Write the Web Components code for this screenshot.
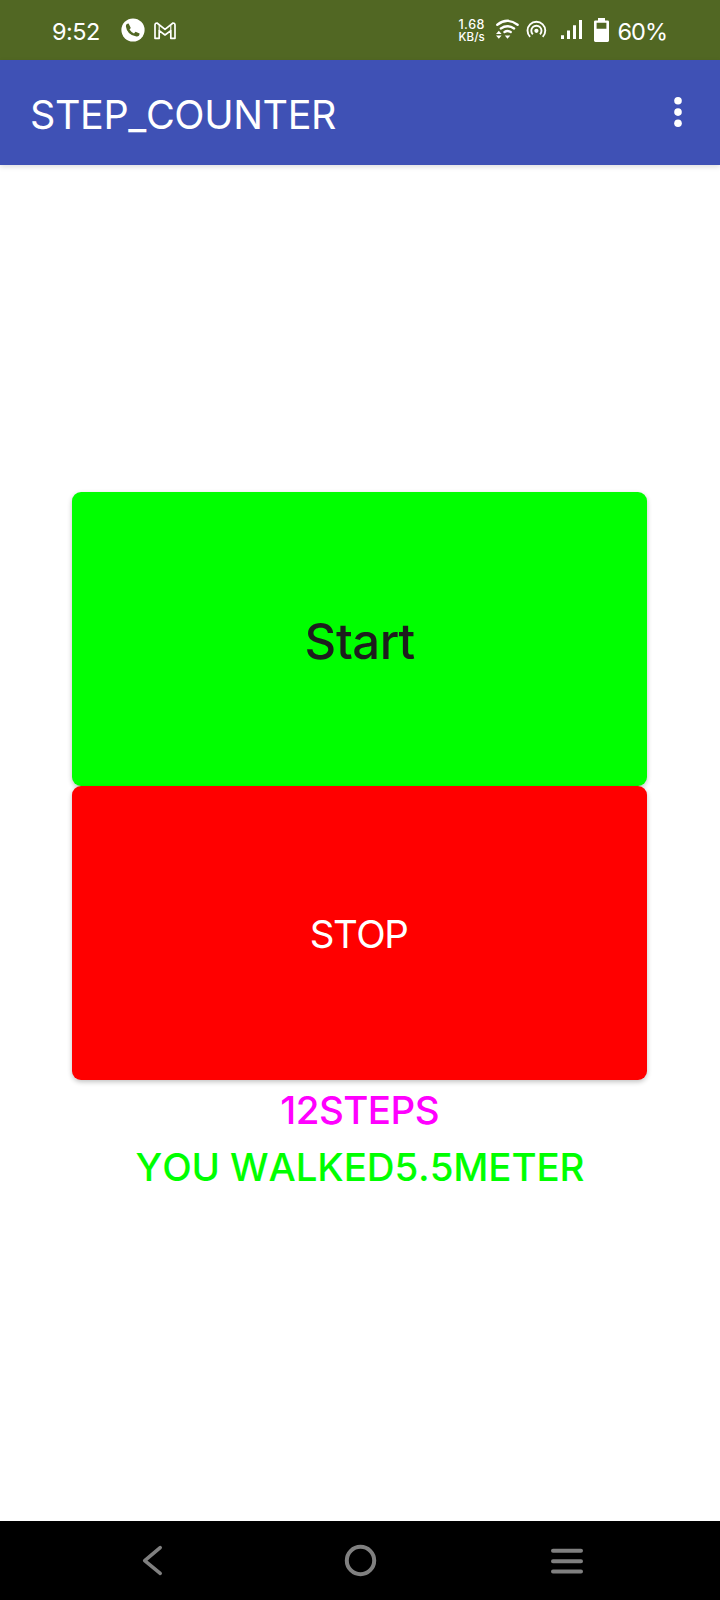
<!DOCTYPE html>
<html lang="en">
<head>
<meta charset="utf-8">
<title>STEP_COUNTER</title>
<style>
html,body{margin:0;padding:0;background:#fff}
body{font-family:Inter,"Liberation Sans",sans-serif}
</style>
</head>
<body>
<step-app></step-app>
<script>
const define = (name, html) => customElements.define(name, class extends HTMLElement {
  constructor() {
    super();
    this.attachShadow({ mode: 'open' }).innerHTML = html;
  }
});

/* A line of text tracked so that its ink spans exactly `width` pixels. */
customElements.define('fit-text', class extends HTMLElement {
  constructor() {
    super();
    this.attachShadow({ mode: 'open' }).innerHTML =
      '<style>:host{display:block;white-space:nowrap}span{display:block}</style><span></span>';
  }
  connectedCallback() {
    const span = this.shadowRoot.querySelector('span');
    const text = this.getAttribute('text'), width = +this.getAttribute('width');
    const size = this.getAttribute('size'), weight = this.getAttribute('weight') || 400;
    const line = this.getAttribute('line') || 1.2;
    const ctx = document.createElement('canvas').getContext('2d');
    ctx.font = `${weight} ${size}px Inter, "Liberation Sans", sans-serif`;
    ctx.fontKerning = 'none';
    const m = ctx.measureText(text);
    const ink = m.actualBoundingBoxLeft + m.actualBoundingBoxRight;
    span.textContent = text;
    span.style.font = `${weight} ${size}px/${line} Inter, "Liberation Sans", sans-serif`;
    span.style.fontKerning = 'none';
    span.style.letterSpacing = (width - ink) / (text.length - 1) + 'px';
    span.style.marginLeft = m.actualBoundingBoxLeft + 'px';
    this.style.width = width + 'px';
  }
});

define('status-bar', `
<style>
:host{display:flex;box-sizing:border-box;height:60px;background:#516723;color:#fff;padding:0 54px 0 53px;align-items:center}
svg{display:block;flex:none}
.time,.pct{padding-top:4px}
.call{margin-left:22px}
.mail{margin-left:9px;margin-top:1px}
.rate{margin-left:auto;padding-top:1px}
.sys{margin-left:9px}
.pct{margin-left:8px}
</style>
<fit-text class="time" text="9:52" width="46" size="23.5"></fit-text>
<svg class="call" width="24" height="24" viewBox="0 0 24 24"><circle cx="12" cy="12" r="11.6" fill="#fff"/><path d="M7.6 5.6 9.8 10 8.5 11.5Q10 14 13 15.4L14.5 13.8 18.6 15.4Q18.5 18.6 15.5 18.4 6.2 17.2 4.9 8.4 4.9 5.6 7.6 5.6Z" fill="#516723"/></svg>
<svg class="mail" width="22" height="18" viewBox="0 0 22 18" fill="none" stroke="#fff" stroke-width="1.7" stroke-linejoin="round"><path d="M1 16.3V3.1Q1 1 3 1L11 7.3 19 1Q21 1 21 3.1V16.3H16.8V8.6L11 13 5.2 8.6V16.3Z"/><path d="M5.2 8.6V3.2M16.8 8.6V3.2" stroke-width="1.1"/></svg>
<div class="rate"><fit-text text="1.68" width="26" size="12.5" weight="500" line="12px"></fit-text><fit-text text="KB/s" width="26" size="11.5" weight="500" line="12px"></fit-text></div>
<svg class="sys" width="117" height="60" viewBox="494 0 117 60" fill="none" stroke="#fff">
<g stroke-width="2.4" stroke-linecap="round"><path d="M497.3 24.7Q507.5 17 517.6 24.7"/><path d="M500.8 28.4Q507.5 24 514.1 28.4"/><path d="M504.5 32.1Q507.5 30 510.7 32.1"/></g>
<path d="M498.8 30.7 501.6 34H496ZM496 35.5H501.6L498.8 38.7ZM504.8 35.5H510.3L507.5 38.7Z" fill="#fff" stroke="none"/>
<g stroke-width="1.9"><path d="M530.1 36.9A8.9 8.9 0 1 1 542.7 36.9"/><path d="M532.8 34.4A5.1 5.1 0 1 1 540 34.4"/></g><circle cx="536.4" cy="30.8" r="2.1" fill="#fff" stroke="none"/>
<g fill="#fff" stroke="none"><path d="M561 35.2h3v3.8h-3zM567 30.4h3V39h-3zM573 25.3h3V39h-3zM579 20h3v19h-3z"/><path fill-rule="evenodd" d="M598 18h7v2.4h2.6q1.4 0 1.4 1.4v18.7q0 1.4-1.4 1.4h-12.2q-1.4 0-1.4-1.4V21.8q0-1.4 1.4-1.4H598ZM596.6 22.8v6h9.8v-6Z"/></g>
</svg>
<fit-text class="pct" text="60%" width="47.5" size="23.5"></fit-text>`);

define('app-bar', `
<style>
:host{display:flex;box-sizing:border-box;height:104.5px;background:#3f51b5;color:#fff;align-items:center;justify-content:space-between;padding:5px 38px 0 32px;box-shadow:0 2px 5px rgba(0,0,0,.13)}
fit-text{padding-top:2px}
svg{display:block;margin-top:-5px}
</style>
<fit-text text="STEP_COUNTER" width="304" size="39.5"></fit-text>
<svg width="8" height="32" viewBox="0 0 8 32" fill="#fff"><circle cx="4" cy="4.8" r="3.8"/><circle cx="4" cy="16.1" r="3.8"/><circle cx="4" cy="27.3" r="3.8"/></svg>`);

define('action-button', `
<style>
:host{display:flex;box-sizing:border-box;width:575px;height:294px;border-radius:9px;align-items:center;justify-content:center;background:var(--fill);color:var(--ink);box-shadow:0 2px 5px rgba(0,0,0,.24)}
</style><slot></slot>`);

define('nav-bar', `
<style>
:host{display:grid;grid-template-columns:repeat(3,207px);justify-content:center;align-items:center;justify-items:center;height:79px;background:#000}
svg{display:block;overflow:visible}
</style>
<svg width="20" height="30" viewBox="0 0 20 30" fill="none" stroke="#808080" stroke-width="3.6" stroke-linecap="round" stroke-linejoin="round"><path d="M17.2 1.7 1.7 14.7 17.2 27.3"/></svg>
<svg width="32" height="32" viewBox="0 0 32 32" fill="none" stroke="#808080" stroke-width="4"><circle cx="16.5" cy="15.5" r="13.7"/></svg>
<svg width="32" height="26" viewBox="0 0 32 26" fill="none" stroke="#808080" stroke-width="4" stroke-linecap="round"><path d="M2 2.8H30M2 13.2H30M2 23.6H30"/></svg>`);

define('step-app', `
<style>
:host{display:flex;flex-direction:column;height:1600px;width:720px;background:#fff}
main{flex:1;display:flex;flex-direction:column;align-items:center;padding-top:327.5px}
.start{--fill:#0f0;--ink:#1d1d1d;padding-left:2px}
.stop{--fill:#f00;--ink:#fff}
.start fit-text{padding-top:7px}
.stop fit-text{padding-top:3px}
.col{margin-right:1px}
.line{display:flex;height:57.3px;align-items:center;justify-content:center}
.steps{color:#f0f;margin-top:1px}
.walked{color:#0f0}
</style>
<status-bar></status-bar>
<app-bar></app-bar>
<main>
<div class="col">
<action-button class="start" role="button"><fit-text text="Start" width="108" size="49" weight="500"></fit-text></action-button>
<action-button class="stop" role="button"><fit-text text="STOP" width="95.5" size="38.5"></fit-text></action-button>
<div class="line steps"><fit-text text="12STEPS" width="156.5" size="38.5" weight="500"></fit-text></div>
<div class="line walked"><fit-text text="YOU WALKED5.5METER" width="448" size="38.5" weight="500"></fit-text></div>
</div>
</main>
<nav-bar></nav-bar>`);
</script>
</body>
</html>
